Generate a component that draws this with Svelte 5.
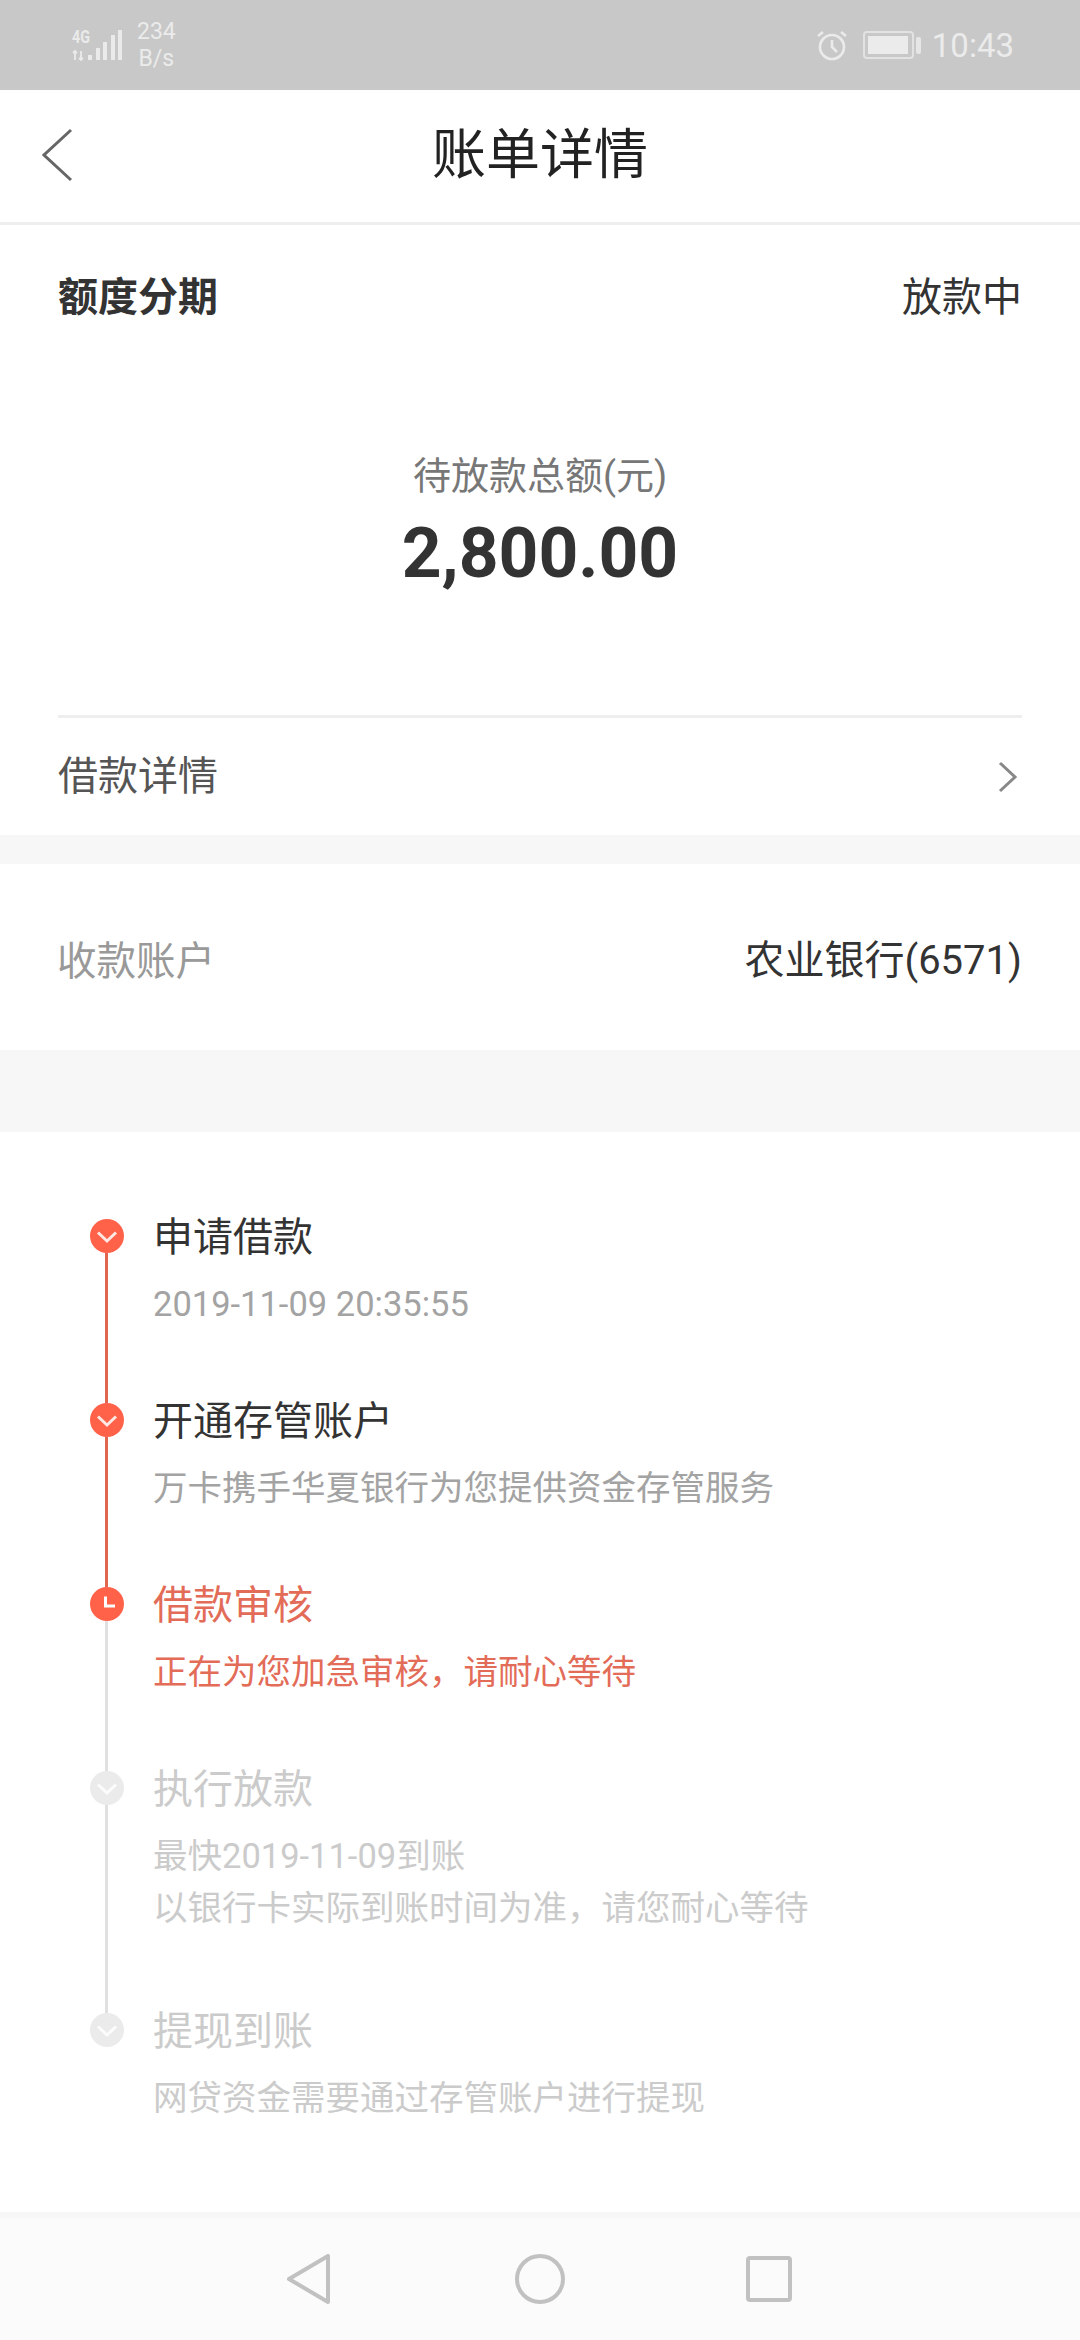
<script>
	const steps = [
		{ title: '申请借款', lines: ['2019-11-09 20:35:55'], state: 'done', icon: 'check' },
		{ title: '开通存管账户', lines: ['万卡携手华夏银行为您提供资金存管服务'], state: 'done', icon: 'check' },
		{ title: '借款审核', lines: ['正在为您加急审核，请耐心等待'], state: 'active', icon: 'clock' },
		{
			title: '执行放款',
			lines: ['最快2019-11-09到账', '以银行卡实际到账时间为准，请您耐心等待'],
			state: 'todo',
			icon: 'check'
		},
		{ title: '提现到账', lines: ['网贷资金需要通过存管账户进行提现'], state: 'todo', icon: 'check' }
	];
</script>

<div class="page">
	<div class="status">
		<div class="status-left">
			<svg class="signal" width="50" height="36" viewBox="0 -4 50 36">
				<text x="0" y="14" class="net" textLength="18" lengthAdjust="spacingAndGlyphs">4G</text>
				<path d="M3 31v-9M1 24l2-2 2 2M9 22v9M7 29l2 2 2-2" fill="none" stroke="#eaeaea" stroke-width="1.8" />
				<rect x="16" y="26" width="4" height="5" fill="#eaeaea" />
				<rect x="24" y="19" width="4" height="12" fill="#eaeaea" />
				<rect x="31" y="13" width="4" height="18" fill="#eaeaea" />
				<rect x="39" y="6" width="4" height="25" fill="#eaeaea" />
				<rect x="46" y="1" width="4" height="30" fill="#eaeaea" />
			</svg>
			<div class="speed">
				<span>234</span>
				<span>B/s</span>
			</div>
		</div>
		<div class="status-right">
			<svg width="32" height="32" viewBox="0 0 32 32" fill="none" stroke="#ebebeb" stroke-width="2.6">
				<circle cx="16" cy="18" r="12" />
				<path d="M16 11v7l5 5M2 7l5-4M30 7l-5-4" />
			</svg>
			<div class="battery">
				<div class="battery-body"><div class="battery-fill"></div></div>
				<div class="battery-tip"></div>
			</div>
			<span class="time">10:43</span>
		</div>
	</div>

	<header class="nav">
		<svg class="back" width="32" height="54" viewBox="0 0 32 54" fill="none" stroke="#666" stroke-width="3">
			<path d="M29 2 2 27l27 25" />
		</svg>
		<h1>账单详情</h1>
	</header>

	<section class="summary">
		<div class="summary-head">
			<b>额度分期</b>
			<span>放款中</span>
		</div>
		<div class="amount">
			<div class="amount-label">待放款总额(元)</div>
			<div class="amount-value">2,800.00</div>
		</div>
		<div class="detail-row">
			<span>借款详情</span>
			<svg width="20" height="32" viewBox="0 0 20 32" fill="none" stroke="#888" stroke-width="3">
				<path d="M2 2l15 14L2 30" />
			</svg>
		</div>
	</section>

	<section class="account">
		<span class="account-label">收款账户</span>
		<span class="account-value">农业银行(6571)</span>
	</section>

	<section class="timeline">
		{#each steps as step, i}
			<div class="step {step.state}" class:last={i === steps.length - 1}>
				<div class="marker">
					<svg class="dot" width="34" height="34" viewBox="0 0 34 34">
						<circle cx="17" cy="17" r="17" />
						{#if step.icon === 'check'}
							<path d="M8 13.500l9 8.500 9-8.500" fill="none" stroke="#fff" stroke-width="3" opacity=".85" />
						{:else}
							<path d="M15.500 9.500v9.500h9.500" fill="none" stroke="#fff" stroke-width="3" />
						{/if}
					</svg>
				</div>
				<div class="text">
					<div class="title">{step.title}</div>
					{#each step.lines as line}
						<div class="sub">{line}</div>
					{/each}
				</div>
			</div>
		{/each}
	</section>

	<footer class="sysnav">
		<svg width="43" height="50" viewBox="0 0 43 50" fill="none" stroke="#c1c1c1" stroke-width="4" stroke-linejoin="round">
			<path d="M2 25 41 2v46z" />
		</svg>
		<svg class="home" width="50" height="50" viewBox="0 0 50 50" fill="none" stroke="#c1c1c1" stroke-width="4">
			<circle cx="25" cy="25" r="23" />
		</svg>
		<svg width="46" height="46" viewBox="0 0 46 46" fill="none" stroke="#c1c1c1" stroke-width="4" stroke-linejoin="round">
			<rect x="2" y="2" width="42" height="42" rx="2" />
		</svg>
	</footer>
</div>

<style>
	:global(body) {
		margin: 0;
		background: #fff;
	}

	.page {
		width: 1080px;
		height: 2340px;
		display: flex;
		flex-direction: column;
		overflow: hidden;
		background: #f7f7f7;
		color: #333;
		font-family: Roboto, "Noto Sans CJK SC", sans-serif;
	}

	.status {
		height: 90px;
		flex: none;
		display: flex;
		justify-content: space-between;
		align-items: center;
		padding: 0 66px 0 72px;
		background: #c8c8c8;
		color: #ebebeb;
		box-sizing: border-box;
	}

	.status-left,
	.status-right {
		display: flex;
		align-items: center;
	}

	.signal {
		margin: -4px 15px 0 0;
	}

	.net {
		font-size: 19px;
		font-weight: 700;
		fill: #eaeaea;
	}

	.speed {
		display: flex;
		flex-direction: column;
		align-items: center;
		font-size: 23px;
		line-height: 27px;
	}

	.battery {
		display: flex;
		align-items: center;
		margin-left: 15px;
	}

	.battery-body {
		width: 51px;
		height: 28px;
		box-sizing: border-box;
		padding: 3px;
		border: 2px solid #e2e2e2;
		border-radius: 4px;
	}

	.battery-fill {
		width: 40px;
		height: 100%;
		background: #ebebeb;
	}

	.battery-tip {
		width: 5px;
		height: 17px;
		margin-left: 2px;
		border-radius: 2px;
		background: #e6e6e6;
	}

	.time {
		margin-left: 11px;
		font-size: 33px;
	}

	.nav {
		height: 135px;
		flex: none;
		box-sizing: border-box;
		position: relative;
		display: flex;
		align-items: center;
		justify-content: center;
		background: #fff;
		border-bottom: 3px solid #eee;
	}

	.back {
		position: absolute;
		left: 42px;
		top: 38px;
	}

	h1 {
		margin: 0 0 12px;
		font-size: 54px;
		font-weight: 400;
		color: #222;
	}

	.summary {
		height: 610px;
		flex: none;
		box-sizing: border-box;
		padding: 0 58px;
		display: flex;
		flex-direction: column;
		background: #fff;
	}

	.summary-head {
		display: flex;
		justify-content: space-between;
		align-items: center;
		height: 100px;
		margin-top: 19px;
		font-size: 40px;
	}

	.amount {
		flex: 1;
		display: flex;
		flex-direction: column;
		align-items: center;
		padding-top: 107px;
		box-sizing: border-box;
	}

	.amount-label {
		font-size: 38px;
		line-height: 50px;
		color: #777;
	}

	.amount-value {
		margin-top: 13px;
		font-size: 69.500px;
		line-height: 80px;
		font-weight: 700;
	}

	.detail-row {
		height: 120px;
		display: flex;
		justify-content: space-between;
		align-items: center;
		box-sizing: border-box;
		padding-bottom: 8px;
		border-top: 3px solid #eee;
		font-size: 40px;
		color: #555;
	}

	.detail-row svg {
		margin: 8px 4px 0 0;
	}

	.account {
		height: 186px;
		flex: none;
		margin-top: 29px;
		box-sizing: border-box;
		padding: 0 58px;
		display: flex;
		justify-content: space-between;
		align-items: center;
		background: #fff;
		font-size: 40px;
	}

	.account-label {
		margin-left: -1px;
		font-size: 39.500px;
		color: #999;
	}

	.timeline {
		flex: 1;
		margin-top: 82px;
		padding: 77px 0 0 90px;
		background: #fff;
	}

	.step {
		position: relative;
		display: flex;
		height: 184px;
	}

	.step:nth-child(4) {
		height: 242px;
	}

	.marker {
		width: 63px;
		flex: none;
		position: relative;
	}

	/* connector down to the next step */
	.marker::after {
		content: "";
		position: absolute;
		left: 15px;
		top: 44px;
		width: 3px;
		height: 150px;
		background: #e0664f;
	}

	.step:nth-child(3) .marker::after,
	.step:nth-child(4) .marker::after {
		background: #e0e0e0;
	}

	.step:nth-child(4) .marker::after {
		height: 208px;
	}

	.step.last .marker::after {
		display: none;
	}

	.dot {
		display: block;
		margin-top: 10px;
	}

	.done .dot,
	.active .dot {
		fill: #ff6249;
	}

	.todo .dot {
		fill: #ebebeb;
	}

	.title {
		font-size: 40px;
		line-height: 58px;
		color: #333;
	}

	.sub {
		margin-top: 15px;
		font-size: 34.500px;
		line-height: 44px;
		color: #a3a3a3;
	}

	.sub + .sub {
		margin-top: 8px;
	}

	.active .title,
	.active .sub {
		color: #e36c58;
	}

	.todo .title,
	.todo .sub {
		color: #cbcbcb;
	}

	.sysnav {
		height: 122px;
		flex: none;
		margin-top: 6px;
		display: flex;
		align-items: center;
		gap: 183px;
		padding-left: 287px;
		background: #fbfbfb;
	}

	.home {
		margin: 0 -2px 0 2px;
	}
</style>
